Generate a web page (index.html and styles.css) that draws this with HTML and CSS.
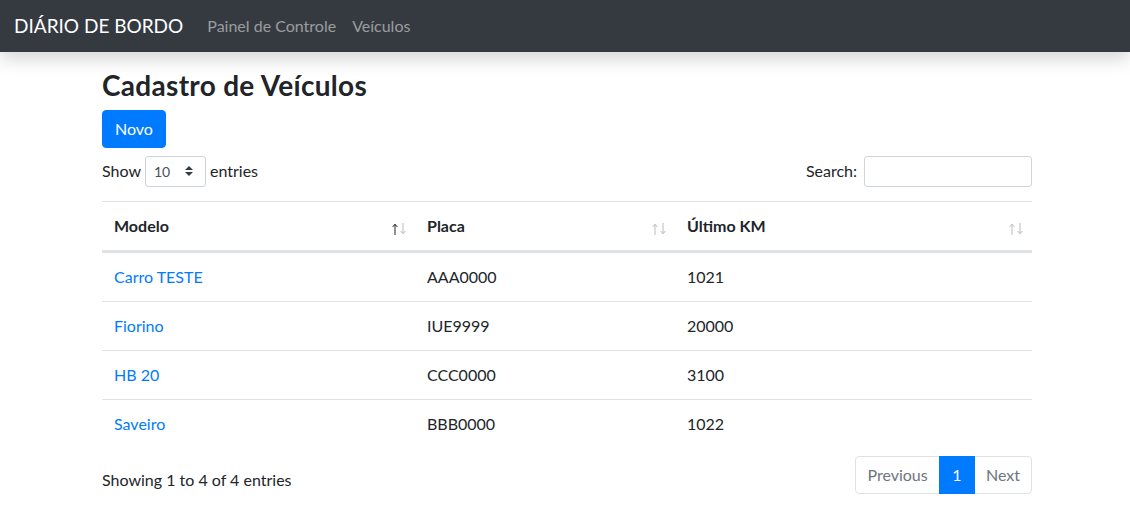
FILE: index.html
```html
<!DOCTYPE html>
<html lang="pt-BR">
<head>
<meta charset="utf-8">
<title>Diário de Bordo - Veículos</title>
<link rel="stylesheet" href="styles.css">
</head>
<body>
<nav class="navbar">
  <a class="brand" href="#">DIÁRIO DE BORDO</a>
  <a class="nav-link" href="#">Painel de Controle</a>
  <a class="nav-link" href="#">Veículos</a>
</nav>
<main class="page">
  <h3 class="title">Cadastro de Veículos</h3>
  <a class="btn-primary" href="#">Novo</a>
  <div class="dt-top">
    <label class="dt-length">Show <select class="dt-select"><option>10</option></select> entries</label>
    <label class="dt-filter">Search:<input type="search" class="dt-search"></label>
  </div>
  <table class="tbl">
    <colgroup>
      <col class="c1">
      <col class="c2">
      <col class="c3">
    </colgroup>
    <thead>
      <tr>
        <th class="sort asc">Modelo</th>
        <th class="sort">Placa</th>
        <th class="sort">Último KM</th>
      </tr>
    </thead>
    <tbody>
      <tr><td><a href="#">Carro TESTE</a></td><td>AAA0000</td><td>1021</td></tr>
      <tr><td><a href="#">Fiorino</a></td><td>IUE9999</td><td>20000</td></tr>
      <tr><td><a href="#">HB 20</a></td><td>CCC0000</td><td>3100</td></tr>
      <tr><td><a href="#">Saveiro</a></td><td>BBB0000</td><td>1022</td></tr>
    </tbody>
  </table>
  <div class="dt-bottom">
    <div class="dt-info">Showing 1 to 4 of 4 entries</div>
    <ul class="pagination">
      <li class="page-item disabled"><a class="page-link first" href="#">Previous</a></li>
      <li class="page-item active"><a class="page-link num" href="#">1</a></li>
      <li class="page-item disabled"><a class="page-link last" href="#">Next</a></li>
    </ul>
  </div>
</main>
</body>
</html>
```

FILE: styles.css
```css
* { box-sizing: border-box; }

html, body {
  margin: 0;
  background: #fff;
}

body {
  font-family: "Lato", "Noto Sans", "Liberation Sans", sans-serif;
  font-size: 16px;
  line-height: 1.5;
  color: #212529;
}

a { text-decoration: none; color: #007bff; }

/* Navbar */
.navbar {
  position: relative;
  z-index: 2;
  display: flex;
  align-items: center;
  height: 52px;
  padding: 0 16px 0 14px;
  background: #343a40;
  box-shadow: 0 8px 16px rgba(0, 0, 0, 0.15);
}

.brand {
  font-size: 19px;
  color: #fff;
  margin-right: 16px;
  line-height: 30px;
}

.nav-link {
  padding: 0 8px;
  color: rgba(255, 255, 255, 0.5);
  line-height: 24px;
}

/* Page */
.page {
  width: 930px;
  margin-left: 102px;
  padding-top: 17px;
}

.title {
  margin: 0 0 7px;
  font-size: 28px;
  font-weight: 700;
  line-height: 1.2;
  letter-spacing: 0.3px;
}

.btn-primary {
  display: inline-block;
  padding: 6px 12px;
  border: 1px solid #007bff;
  border-radius: 4px;
  background: #007bff;
  color: #fff;
  line-height: 24px;
  vertical-align: top;
}

.dt-top {
  display: flex;
  justify-content: space-between;
  align-items: center;
  margin-top: 8px;
  height: 31px;
  margin-bottom: 14px;
}

.dt-length, .dt-filter {
  display: flex;
  align-items: center;
  white-space: nowrap;
}

.dt-select {
  -webkit-appearance: none;
  appearance: none;
  width: 61px;
  height: 31px;
  margin: 0 4px;
  padding: 4px 24px 4px 8px;
  font-family: inherit;
  font-size: 14px;
  line-height: 21px;
  color: #495057;
  border: 1px solid #ced4da;
  border-radius: 3px;
  background: #fff url("data:image/svg+xml,%3csvg xmlns='http://www.w3.org/2000/svg' width='4' height='5' viewBox='0 0 4 5'%3e%3cpath fill='%23343a40' d='M2 0L0 2h4zm0 5L0 3h4z'/%3e%3c/svg%3e") no-repeat right 12px center / 8px 10px;
}

.dt-search {
  width: 168px;
  height: 31px;
  margin-left: 7px;
  padding: 4px 8px;
  font-family: inherit;
  font-size: 14px;
  border: 1px solid #ced4da;
  border-radius: 3px;
  background: #fff;
}

/* Table */
.tbl {
  width: 930px;
  table-layout: fixed;
  border-collapse: separate;
  border-spacing: 0;
  margin-bottom: 6px;
}

.c1 { width: 313px; }
.c2 { width: 260px; }
.c3 { width: 357px; }

.tbl th {
  position: relative;
  text-align: left;
  vertical-align: bottom;
  font-weight: 700;
  padding: 12px 30px 12px 12px;
  line-height: 24px;
  border-top: 1px solid #dee2e6;
  border-bottom: 2px solid #dee2e6;
}

.tbl th.sort::before,
.tbl th.sort::after {
  content: "";
  position: absolute;
  top: 21px;
  width: 6px;
  height: 12px;
  opacity: 0.3;
  background: no-repeat center / 6px 12px;
}

.tbl th.sort::before {
  right: 17px;
  background-image: url("data:image/svg+xml,%3csvg xmlns='http://www.w3.org/2000/svg' width='6' height='12' viewBox='0 0 6 12'%3e%3cpath fill='none' stroke='%23212529' stroke-width='1' d='M3 1.5V12M0.6 4L3 1.2L5.4 4'/%3e%3c/svg%3e");
}

.tbl th.sort::after {
  right: 9px;
  background-image: url("data:image/svg+xml,%3csvg xmlns='http://www.w3.org/2000/svg' width='6' height='12' viewBox='0 0 6 12'%3e%3cpath fill='none' stroke='%23212529' stroke-width='1' d='M3 0V10.5M0.6 8L3 10.8L5.4 8'/%3e%3c/svg%3e");
}

.tbl th.asc::before { opacity: 1; }

.tbl td {
  padding: 12px;
  line-height: 24px;
  border-top: 1px solid #dee2e6;
  vertical-align: top;
}

/* Bottom */
.dt-bottom {
  display: flex;
  justify-content: space-between;
  align-items: flex-start;
}

.dt-info {
  padding-top: 14.5px;
  white-space: nowrap;
}

.pagination {
  display: flex;
  list-style: none;
  margin: 2px 0;
  padding: 0;
}

.page-link {
  display: block;
  padding: 8px 12px;
  margin-left: -1px;
  line-height: 20px;
  color: #007bff;
  background: #fff;
  border: 1px solid #dee2e6;
}

.page-link.first { margin-left: 0; padding: 8px 11px; border-radius: 4px 0 0 4px; }
.page-link.last { padding: 8px 11px; border-radius: 0 4px 4px 0; }
.page-link.num { padding: 8px 12.5px; }

.disabled .page-link { color: #6c757d; }

.active .page-link {
  position: relative;
  z-index: 1;
  color: #fff;
  background: #007bff;
  border-color: #007bff;
}
```
